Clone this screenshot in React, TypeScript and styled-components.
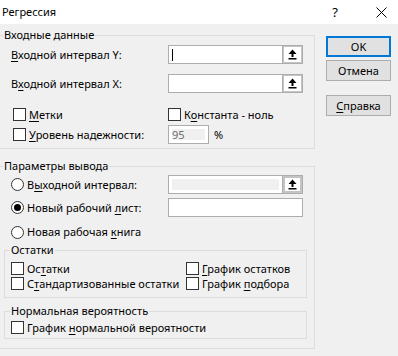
import { FC, ReactNode } from "react";
import styled, { createGlobalStyle } from "styled-components";

const GlobalStyle = createGlobalStyle`
  html, body {
    margin: 0;
    padding: 0;
  }
  body {
    font-family: "Noto Sans", "Open Sans", sans-serif;
    font-size: 11px;
    color: #000;
  }
`;

const Window = styled.div`
  width: 398px;
  height: 356px;
  overflow: hidden;
  background: #f0f0f0;
  display: flex;
  flex-direction: column;
`;

const TitleBar = {
  Bar: styled.div`
    height: 24px;
    flex: none;
    background: #fff;
    display: flex;
    align-items: center;
    padding-left: 2px;
  `,
  Title: styled.span`
    flex: 1;
    line-height: 14px;
  `,
  Help: styled.span`
    width: 30px;
    margin-left: 4px;
    text-align: center;
    font-size: 13px;
    line-height: 14px;
  `,
  Close: styled.span`
    width: 30px;
    margin-left: 16px;
    margin-right: 2px;
    display: flex;
    justify-content: center;
  `,
};

const Body = styled.div`
  flex: 1;
  display: flex;
  align-items: flex-start;
`;

const Main = styled.div`
  width: 315px;
  flex: none;
  display: flex;
  flex-direction: column;
  padding-top: 4px;
`;

const Side = styled.div`
  display: flex;
  flex-direction: column;
  padding: 12px 0 0 11px;
`;

const DialogButton = styled.button<{ $default?: boolean; $mt?: number }>`
  width: 65px;
  height: 21px;
  margin: ${(p) => p.$mt ?? 0}px 0 0 0;
  padding: 0;
  font-family: inherit;
  font-size: 11px;
  color: #000;
  background: #e1e1e1;
  border: ${(p) => (p.$default ? "2px solid #0078d7" : "1px solid #adadad")};
`;

const OuterGroup = styled.fieldset<{ $mt?: number; $pb: number }>`
  margin: ${(p) => p.$mt ?? 0}px 0 0 0;
  min-width: 0;
  padding: 0 0 ${(p) => p.$pb}px 0;
  border: 1px solid #dcdcdc;
  border-left: none;
`;

const InnerGroup = styled.fieldset<{ $mt: number; $pt: number; $pb: number }>`
  width: 303px;
  box-sizing: border-box;
  margin: ${(p) => p.$mt}px 0 0 4px;
  min-width: 0;
  padding: ${(p) => p.$pt}px 0 ${(p) => p.$pb}px 6px;
  border: 1px solid #dcdcdc;
`;

const Legend = styled.legend<{ $ml: number }>`
  margin-left: ${(p) => p.$ml}px;
  padding: 0 1px;
  line-height: 14px;
`;

const Row = styled.div<{ $mt?: number; $ml?: number; $h: number }>`
  display: flex;
  align-items: center;
  height: ${(p) => p.$h}px;
  margin: ${(p) => p.$mt ?? 0}px 0 0 ${(p) => p.$ml ?? 0}px;
`;

const Cell = styled.div<{ $w: number; $pl?: number }>`
  width: ${(p) => p.$w}px;
  flex: none;
  display: flex;
  align-items: center;
  padding-left: ${(p) => p.$pl ?? 0}px;
  box-sizing: border-box;
`;

const AccessKey = styled.span`
  text-decoration: underline;
  text-decoration-thickness: 1px;
  text-underline-offset: 2px;
`;

const Text = styled.span`
  line-height: 14px;
  white-space: nowrap;
`;

const CheckLabel = styled.label`
  display: inline-flex;
  align-items: center;
  gap: 3px;
`;

const CheckBox = styled.span`
  width: 13px;
  height: 13px;
  box-sizing: border-box;
  border: 1px solid #333;
  background: #fff;
  flex: none;
`;

const RadioCircle = styled.span<{ $checked?: boolean }>`
  width: 13px;
  height: 13px;
  box-sizing: border-box;
  border: 1px solid #333;
  border-radius: 50%;
  background: #fff;
  flex: none;
  display: flex;
  align-items: center;
  justify-content: center;
  &::after {
    content: "";
    width: 7px;
    height: 7px;
    border-radius: 50%;
    background: ${(p) => (p.$checked ? "#000" : "transparent")};
  }
`;

const RadioLabel = styled.label`
  display: inline-flex;
  align-items: center;
  gap: 3px;
`;

const Field = styled.div<{ $w: number }>`
  width: ${(p) => p.$w}px;
  height: 19px;
  box-sizing: border-box;
  border: 1px solid #adadad;
  background: #fff;
  display: flex;
`;

const FieldText = styled.div<{ $disabled?: boolean }>`
  flex: 1;
  display: flex;
  align-items: center;
  padding-left: 3px;
  color: #6d6d6d;
  background: ${(p) => (p.$disabled ? "#f0f0f0" : "#fff")};
  box-shadow: ${(p) => (p.$disabled ? "inset 0 0 0 3px #fff" : "none")};
`;

const Caret = styled.span`
  width: 1px;
  height: 12px;
  background: #000;
`;

const PickButton = styled.div<{ $disabled?: boolean }>`
  width: 20px;
  flex: none;
  box-sizing: border-box;
  border-left: 1px solid #adadad;
  background: #fff;
  box-shadow: inset 0 0 0 ${(p) => (p.$disabled ? 2 : 1)}px #c4c4c4;
  display: flex;
  align-items: center;
  justify-content: center;
`;

const Percent = styled.span`
  margin-left: 5px;
`;

const PickIcon: FC = () => (
  <svg width="9" height="11" viewBox="0 0 9 11">
    <path d="M4.5 0.5 L8.5 5 H5.5 V8 H3.5 V5 H0.5 Z" fill="#000" />
    <rect x="0.5" y="9" width="8" height="1.5" fill="#000" />
  </svg>
);

const CloseIcon: FC = () => (
  <svg width="11" height="11" viewBox="0 0 11 11">
    <path d="M0.5 0.5 L10.5 10.5 M10.5 0.5 L0.5 10.5" stroke="#000" strokeWidth="1" />
  </svg>
);

const Check: FC<{ children: ReactNode }> = ({ children }) => (
  <CheckLabel>
    <CheckBox />
    <Text>{children}</Text>
  </CheckLabel>
);

const Radio: FC<{ checked?: boolean; children: ReactNode }> = ({ checked, children }) => (
  <RadioLabel>
    <RadioCircle $checked={checked} />
    <Text>{children}</Text>
  </RadioLabel>
);

const RangePicker: FC<{ caret?: boolean; disabled?: boolean }> = ({ caret, disabled }) => (
  <Field $w={135}>
    <FieldText $disabled={disabled}>{caret && <Caret />}</FieldText>
    <PickButton $disabled={disabled}>
      <PickIcon />
    </PickButton>
  </Field>
);

const App: FC = () => {
  return (
    <Window>
      <GlobalStyle />
      <TitleBar.Bar>
        <TitleBar.Title>Регрессия</TitleBar.Title>
        <TitleBar.Help>?</TitleBar.Help>
        <TitleBar.Close>
          <CloseIcon />
        </TitleBar.Close>
      </TitleBar.Bar>
      <Body>
        <Main>
          <OuterGroup $pb={4}>
            <Legend $ml={3}>Входные данные</Legend>
            <Row $h={19} $mt={3} $ml={11}>
              <Cell $w={157}>
                <Text>
                  <AccessKey>В</AccessKey>ходной интервал Y:
                </Text>
              </Cell>
              <RangePicker caret />
            </Row>
            <Row $h={19} $mt={10} $ml={11}>
              <Cell $w={157}>
                <Text>
                  В<AccessKey>х</AccessKey>одной интервал X:
                </Text>
              </Cell>
              <RangePicker />
            </Row>
            <Row $h={13} $mt={15} $ml={11}>
              <Cell $w={157} $pl={2}>
                <Check>
                  <AccessKey>М</AccessKey>етки
                </Check>
              </Cell>
              <Check>
                К<AccessKey>о</AccessKey>нстанта - ноль
              </Check>
            </Row>
            <Row $h={19} $mt={4} $ml={11}>
              <Cell $w={157} $pl={2}>
                <Check>
                  <AccessKey>У</AccessKey>ровень надежности:
                </Check>
              </Cell>
              <Field $w={41}>
                <FieldText $disabled>95</FieldText>
              </Field>
              <Percent>%</Percent>
            </Row>
          </OuterGroup>

          <OuterGroup $mt={10} $pb={9}>
            <Legend $ml={3}>Параметры вывода</Legend>
            <Row $h={19} $mt={2} $ml={11}>
              <Cell $w={157}>
                <Radio>
                  В<AccessKey>ы</AccessKey>ходной интервал:
                </Radio>
              </Cell>
              <RangePicker disabled />
            </Row>
            <Row $h={19} $mt={4} $ml={11}>
              <Cell $w={157}>
                <Radio checked>
                  Новый рабочий <AccessKey>л</AccessKey>ист:
                </Radio>
              </Cell>
              <Field $w={135} />
            </Row>
            <Row $h={14} $mt={8} $ml={11}>
              <Radio>
                Новая рабочая <AccessKey>к</AccessKey>нига
              </Radio>
            </Row>

            <InnerGroup $mt={4} $pt={5} $pb={7}>
              <Legend $ml={-1}>Остатки</Legend>
              <Row $h={13}>
                <Cell $w={175}>
                  <Check>
                    Ос<AccessKey>т</AccessKey>атки
                  </Check>
                </Cell>
                <Check>
                  <AccessKey>Г</AccessKey>рафик остатков
                </Check>
              </Row>
              <Row $h={13} $mt={2}>
                <Cell $w={175}>
                  <Check>
                    С<AccessKey>т</AccessKey>андартизованные остатки
                  </Check>
                </Cell>
                <Check>
                  График <AccessKey>п</AccessKey>одбора
                </Check>
              </Row>
            </InnerGroup>

            <InnerGroup $mt={6} $pt={3} $pb={4}>
              <Legend $ml={-1}>Нормальная вероятность</Legend>
              <Row $h={13}>
                <Check>
                  График <AccessKey>н</AccessKey>ормальной вероятности
                </Check>
              </Row>
            </InnerGroup>
          </OuterGroup>
        </Main>

        <Side>
          <DialogButton $default>OK</DialogButton>
          <DialogButton $mt={3}>Отмена</DialogButton>
          <DialogButton $mt={14}>
            <AccessKey>С</AccessKey>правка
          </DialogButton>
        </Side>
      </Body>
    </Window>
  );
};

export default App;
